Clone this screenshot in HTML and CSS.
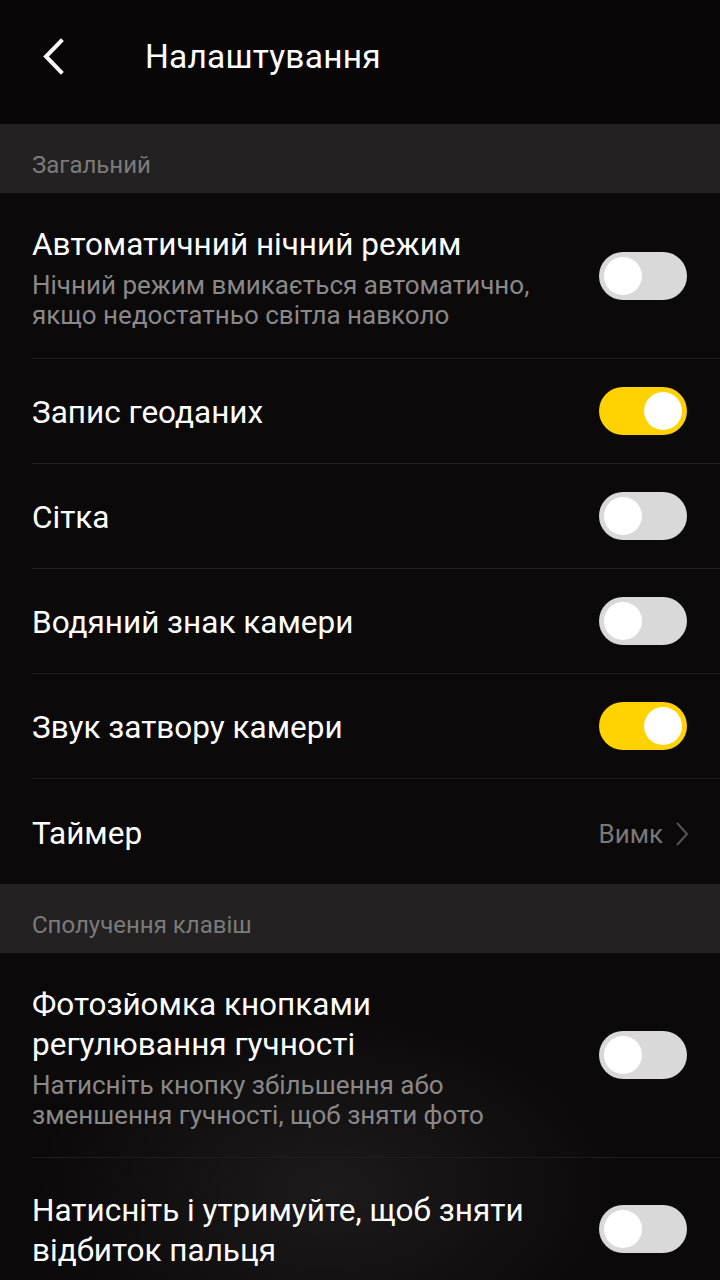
FILE: index.html
```html
<!DOCTYPE html>
<html lang="uk">
<head>
<meta charset="utf-8">
<link rel="stylesheet" href="styles.css">
</head>
<body>
<div class="screen">
  <header class="topbar">
    <svg class="back" width="24" height="40" viewBox="0 0 24 40"><path d="M20 4 L5 19.5 L20 35" fill="none" stroke="#fff" stroke-width="4" stroke-linecap="square"/></svg>
    <h1 class="title">Налаштування</h1>
  </header>

  <div class="section">Загальний</div>
  <div class="row tall">
    <div class="text">
      <div class="label">Автоматичний нічний режим</div>
      <div class="sub">Нічний режим вмикається автоматично, якщо недостатньо світла навколо</div>
    </div>
    <span class="toggle"></span>
  </div>
  <div class="row">
    <div class="text"><div class="label">Запис геоданих</div></div>
    <span class="toggle on"></span>
  </div>
  <div class="row">
    <div class="text"><div class="label">Сітка</div></div>
    <span class="toggle"></span>
  </div>
  <div class="row">
    <div class="text"><div class="label">Водяний знак камери</div></div>
    <span class="toggle"></span>
  </div>
  <div class="row">
    <div class="text"><div class="label">Звук затвору камери</div></div>
    <span class="toggle on"></span>
  </div>
  <div class="row last">
    <div class="text"><div class="label">Таймер</div></div>
    <div class="value">Вимк
      <svg width="14" height="26" viewBox="0 0 14 26"><path d="M2 2 L12 13 L2 24" fill="none" stroke="#555" stroke-width="2"/></svg>
    </div>
  </div>

  <div class="section">Сполучення клавіш</div>
  <div class="row tall2">
    <div class="text">
      <div class="label">Фотозйомка кнопками регулювання гучності</div>
      <div class="sub">Натисніть кнопку збільшення або зменшення гучності, щоб зняти фото</div>
    </div>
    <span class="toggle"></span>
  </div>
  <div class="row tall3 last">
    <div class="text">
      <div class="label">Натисніть і утримуйте, щоб зняти відбиток пальця</div>
    </div>
    <span class="toggle"></span>
  </div>
</div>
</body>
</html>
```

FILE: styles.css
```css
html, body {
  margin: 0;
  padding: 0;
  background: #0b0909;
}
body {
  font-family: Roboto, "Noto Sans", sans-serif;
  color: #fff;
}
.screen {
  width: 720px;
  height: 1280px;
  overflow: hidden;
  background:
    radial-gradient(ellipse 420px 260px at 330px 1190px, rgba(60,58,58,0.35), rgba(0,0,0,0) 70%),
    #0b0909;
}
.topbar {
  height: 124px;
  display: flex;
  align-items: center;
  background: #080606;
}
.back {
  margin-left: 41px;
  margin-top: -10px;
}
.title {
  margin: -12px 0 0 80px;
  font-size: 33.5px;
  font-weight: 400;
  letter-spacing: 0.2px;
}
.section {
  height: 69px;
  box-sizing: border-box;
  padding: 14px 0 0 32px;
  background: #232121;
  color: #7b7b7b;
  font-size: 24px;
  line-height: 54px;
}
.row {
  margin-left: 32px;
  height: 105px;
  display: flex;
  align-items: center;
  justify-content: space-between;
  padding: 4px 33px 0 0;
  border-bottom: 1px solid #1f1c1c;
  box-sizing: border-box;
}
.row.last { border-bottom: none; }
.row.tall { height: 166px; }
.row.tall2 { height: 205px; }
.row.tall3 { height: 142px; }
.row .toggle { margin-top: -4px; }
.text { max-width: 525px; }
.label {
  font-size: 31.5px;
  line-height: 40px;
  color: #fff;
}
.sub {
  font-size: 26px;
  line-height: 30px;
  color: #8a8888;
  margin-top: 5px;
}
.toggle {
  flex: none;
  position: relative;
  width: 88px;
  height: 48px;
  border-radius: 24px;
  background: #d9d9d9;
}
.toggle::after {
  content: "";
  position: absolute;
  top: 5px;
  left: 5px;
  width: 38px;
  height: 38px;
  border-radius: 50%;
  background: #fff;
}
.toggle.on { background: #ffd200; }
.toggle.on::after { left: 45px; }
.value {
  display: flex;
  align-items: center;
  gap: 12px;
  font-size: 26px;
  color: #7a7878;
  margin-right: -2px;
}
```
